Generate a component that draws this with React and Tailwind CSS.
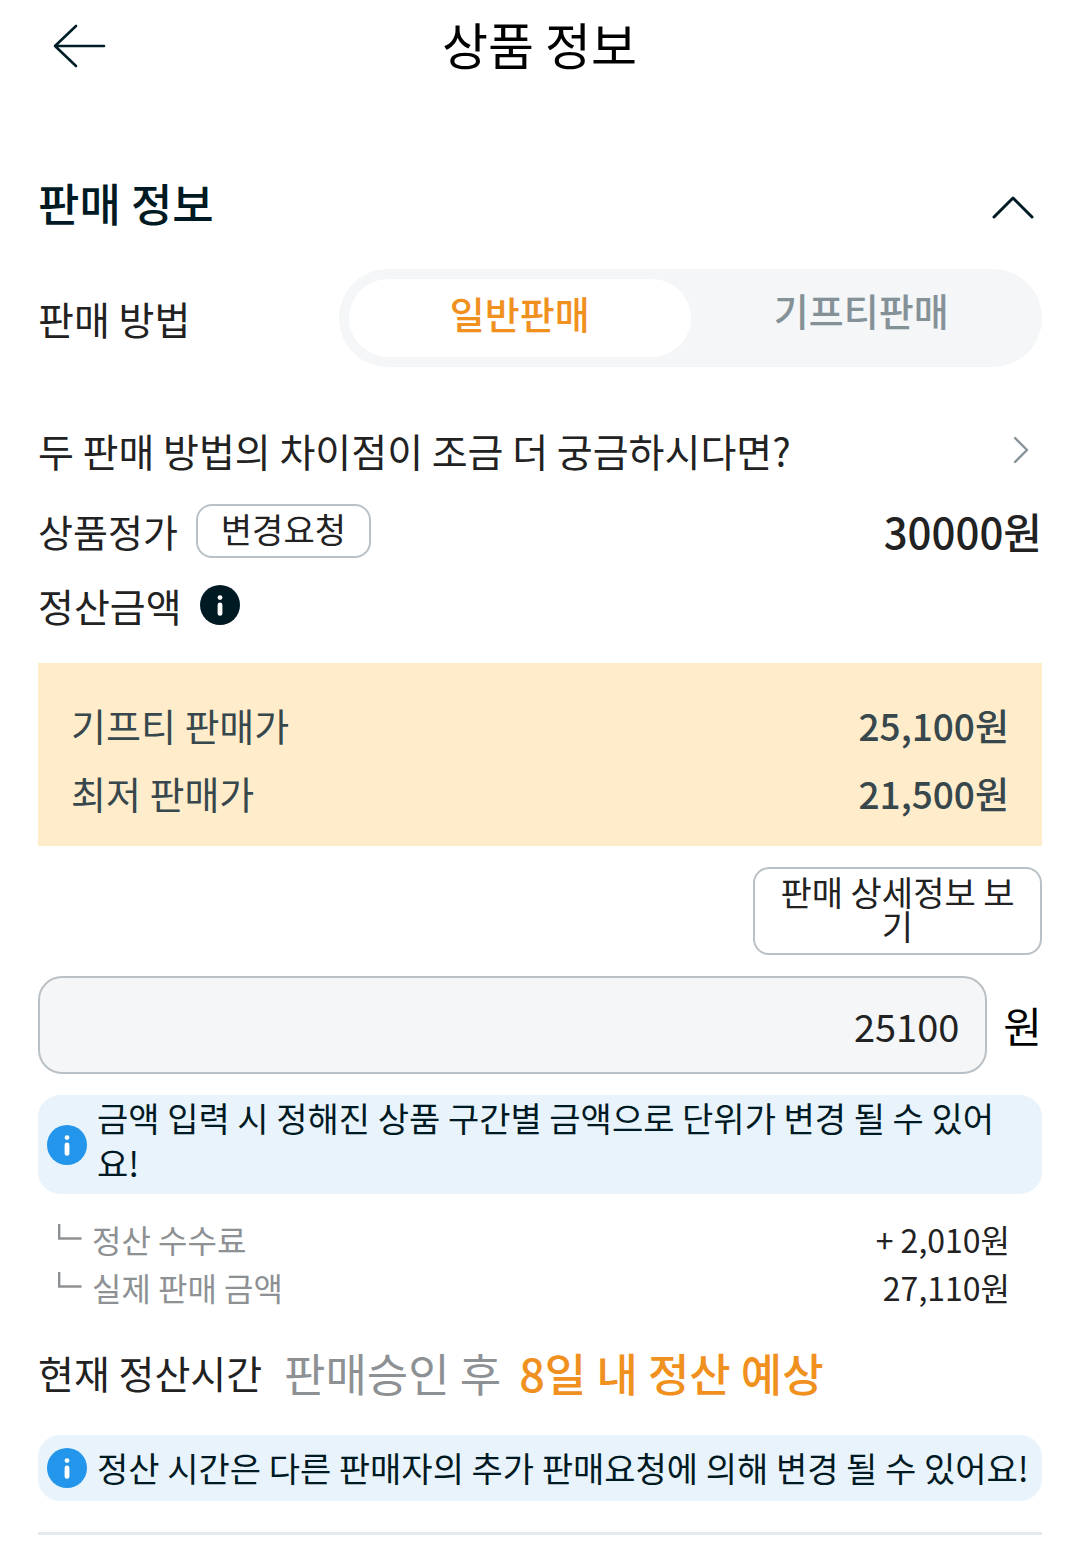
import { useState } from "react";

const InfoIcon = ({ className }) => (
  <svg viewBox="0 0 40 40" className={`size-10 shrink-0 ${className}`} aria-hidden="true">
    <circle cx="20" cy="20" r="20" fill="currentColor" />
    <circle cx="20" cy="12.6" r="2.4" fill="#fff" />
    <path d="M20 20v8.4" stroke="#fff" strokeWidth="4.8" strokeLinecap="round" />
  </svg>
);

const Notice = ({ children }) => (
  <div className="flex items-center gap-[10px] bg-[#e8f3fc] rounded-[22px] pl-[9px] pr-4">
    <InfoIcon className="text-[#2395ea]" />
    {children}
  </div>
);

const PriceRow = ({ label, value }) => (
  <div className="flex items-center justify-between h-[68px] text-[#37474c]">
    <dt className="text-[38px]">{label}</dt>
    <dd className="text-[37px] font-medium">{value}</dd>
  </div>
);

const FeeRow = ({ label, value }) => (
  <div className="flex items-center justify-between h-12 text-[32px]">
    <dt className="flex items-center gap-[10px] text-[#8e9194]">
      <svg viewBox="0 0 26 48" className="w-[26px] h-12" fill="none" stroke="currentColor" strokeWidth="2.4" aria-hidden="true">
        <path d="M3.2 9v14.5H25.5" />
      </svg>
      {label}
    </dt>
    <dd className="text-[#222]">{value}</dd>
  </div>
);

const methods = [
  { id: "normal", label: "일반판매" },
  { id: "gifti", label: "기프티판매" },
];

const App = () => {
  const [method, setMethod] = useState("normal");
  const [open, setOpen] = useState(true);
  const [price, setPrice] = useState("25100");

  return (
    <div className="min-h-screen bg-white text-[#222] pb-5 leading-none font-['Noto_Sans_CJK_KR',sans-serif]">
      <header className="grid grid-cols-[1fr_auto_1fr] items-center h-[90px] px-[52px]">
        <button type="button" aria-label="뒤로" className="w-14 h-12">
          <svg viewBox="0 0 56 48" className="w-14 h-12" fill="none" stroke="#001e28" strokeWidth="2.6" strokeLinecap="round" strokeLinejoin="round">
            <path d="M24 5L3 25l21 20M3 25h49" />
          </svg>
        </button>
        <h1 className="pb-1 text-[50px] text-black">상품 정보</h1>
      </header>

      <main className="pl-[38px] pr-[37px]">
        <div className="flex items-center justify-between h-[60px] mt-[82px] pr-2">
          <h2 className="text-[45px] font-medium text-[#001a24]">판매 정보</h2>
          <button type="button" aria-label="판매 정보 접기" aria-expanded={open} onClick={() => setOpen(!open)} className="pt-3">
            <svg viewBox="0 0 42 24" className="w-[42px] h-6" fill="none" stroke="#001a24" strokeWidth="3" strokeLinecap="round" strokeLinejoin="round">
              <path d="M2 21L21 2l19 19" />
            </svg>
          </button>
        </div>

        {open && (
          <>
            <div className="flex items-center mt-[37px]">
              <span className="w-[301px] text-[39px]">판매 방법</span>
              <div role="tablist" className="flex flex-1 h-[98px] p-[10px] rounded-[49px] bg-[#f4f6f7]">
                {methods.map(({ id, label }) => (
                  <button
                    key={id}
                    type="button"
                    role="tab"
                    aria-selected={method === id}
                    onClick={() => setMethod(id)}
                    className={`flex-1 rounded-[39px] text-[38px] font-medium ${
                      method === id ? "bg-white pb-[10px] text-[#f0901e]" : "pb-4 text-[#849197]"
                    }`}
                  >
                    {label}
                  </button>
                ))}
              </div>
            </div>

            <a href="#difference" className="flex items-center justify-between h-[60px] mt-[53px] pr-3 text-[39px]">
              두 판매 방법의 차이점이 조금 더 궁금하시다면?
              <svg viewBox="0 0 18 28" className="w-[18px] h-7" fill="none" stroke="#87939a" strokeWidth="2.4" strokeLinecap="round" strokeLinejoin="round">
                <path d="M3 2l12 12L3 26" />
              </svg>
            </a>

            <div className="flex items-center mt-6">
              <span className="text-[38px]">상품정가</span>
              <button type="button" className="ml-[18px] h-[54px] px-[23px] pb-1 border-2 border-[#b9c1c6] rounded-2xl text-[34px]">
                변경요청
              </button>
              <strong className="ml-auto text-[42px] font-medium">30000원</strong>
            </div>

            <div className="flex items-center gap-[18px] mt-[27px]">
              <span className="text-[39px]">정산금액</span>
              <button type="button" aria-label="정산금액 안내">
                <InfoIcon className="text-[#001a24]" />
              </button>
            </div>

            <dl className="mt-[38px] pt-7 pb-[19px] px-[33px] bg-[#feeccb]">
              <PriceRow label="기프티 판매가" value="25,100원" />
              <PriceRow label="최저 판매가" value="21,500원" />
            </dl>

            <div className="flex justify-end mt-[21px]">
              <button type="button" className="w-[289px] pt-[6px] pb-[10px] px-6 border-2 border-[#b9c1c6] rounded-2xl text-[34px] leading-[34px] break-all">
                판매 상세정보 보기
              </button>
            </div>

            <div className="flex items-center gap-4 mt-[21px]">
              <input
                id="price"
                inputMode="numeric"
                value={price}
                onChange={(e) => setPrice(e.target.value)}
                className="flex-1 min-w-0 h-[98px] px-[26px] border-2 border-[#b9c1c6] rounded-3xl bg-[#f4f6f8] text-right text-[38px] text-[#222]"
              />
              <label htmlFor="price" className="text-[42px] text-black">원</label>
            </div>

            <div className="mt-[21px]">
              <Notice>
                <p className="pb-[9px] text-[34px] leading-[45px] text-[#001a24] break-all">
                  금액 입력 시 정해진 상품 구간별 금액으로 단위가 변경 될 수 있어요!
                </p>
              </Notice>
            </div>

            <dl className="mt-[21px] pl-[18px] pr-8">
              <FeeRow label="정산 수수료" value="+ 2,010원" />
              <FeeRow label="실제 판매 금액" value="27,110원" />
            </dl>

            <div className="flex items-center h-[60px] mt-[31px]">
              <span className="text-[39px]">현재 정산시간</span>
              <p className="ml-[22px] text-[45px] text-[#8e9194]">
                판매승인 후 <strong className="ml-2 font-medium text-[#f0901e]">8일 내 정산 예상</strong>
              </p>
            </div>

            <div className="mt-[33px]">
              <Notice>
                <p className="text-[34px] leading-[66px] text-[#001a24] whitespace-nowrap">
                  정산 시간은 다른 판매자의 추가 판매요청에 의해 변경 될 수 있어요!
                </p>
              </Notice>
            </div>
          </>
        )}

        <hr className="mt-[31px] border-t-[3px] border-[#e4eaed]" />
      </main>
    </div>
  );
};

export default App;
